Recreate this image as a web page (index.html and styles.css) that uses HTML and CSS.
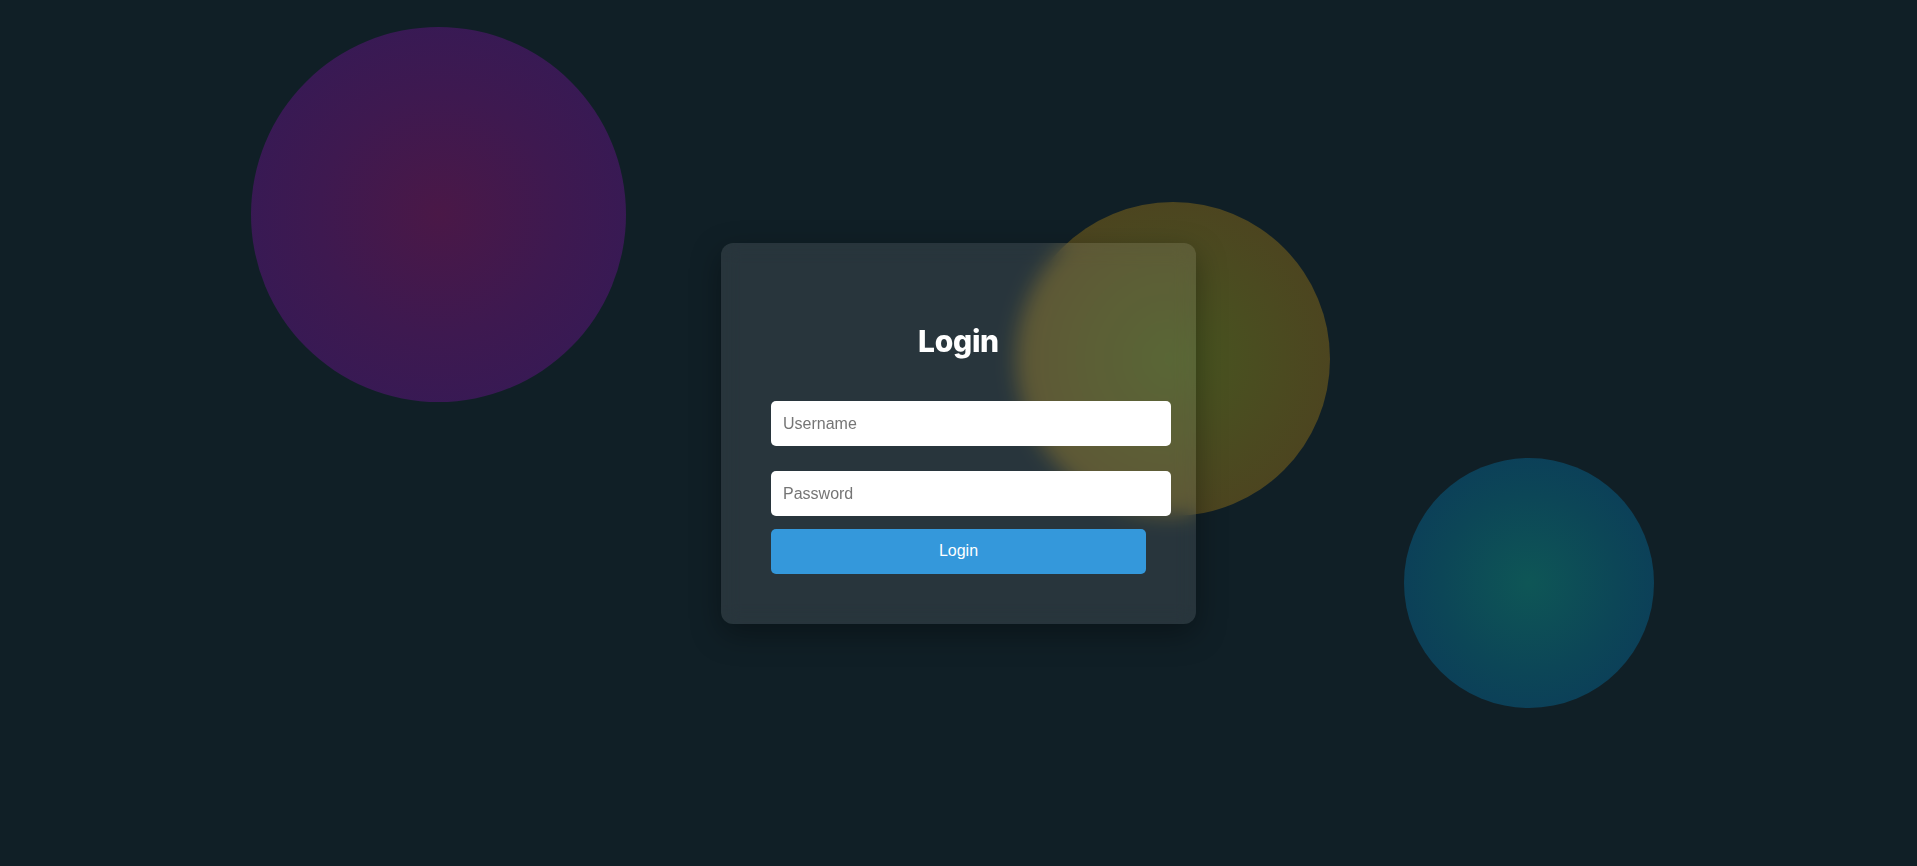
FILE: index.html
```html
<!DOCTYPE html>
<html lang="en">
<head>
<meta charset="utf-8">
<title>Login</title>
<link rel="stylesheet" href="styles.css">
</head>
<body>
  <div class="blob blob-purple"></div>
  <div class="blob blob-yellow"></div>
  <div class="blob blob-teal"></div>
  <main class="stage">
    <form class="card">
      <h1 class="title">Login</h1>
      <input class="field field-user" type="text" placeholder="Username">
      <input class="field field-pass" type="password" placeholder="Password">
      <button class="submit" type="button">Login</button>
    </form>
  </main>
</body>
</html>
```

FILE: styles.css
```css
html, body {
  margin: 0;
  padding: 0;
  height: 100%;
}

body {
  background: #101f26;
  font-family: "Liberation Sans", Arial, sans-serif;
  overflow: hidden;
  position: relative;
}

.blob {
  position: absolute;
  border-radius: 50%;
  z-index: 0;
}

.blob-purple {
  left: 251px;
  top: 27px;
  width: 375px;
  height: 375px;
  background: radial-gradient(circle, #4a1847 0%, #3e1950 45%, #321a58 100%);
}

.blob-yellow {
  left: 1016px;
  top: 202px;
  width: 314px;
  height: 314px;
  background: radial-gradient(circle, #475620 0%, #4b4a20 50%, #4e3e1f 100%);
}

.blob-teal {
  left: 1404px;
  top: 458px;
  width: 250px;
  height: 250px;
  background: radial-gradient(circle, #0e5656 0%, #0c4657 50%, #0b385a 100%);
}

.stage {
  position: relative;
  z-index: 1;
  height: 100%;
  display: flex;
  align-items: center;
  justify-content: center;
}

.card {
  box-sizing: border-box;
  width: 475px;
  padding: 50px;
  border-radius: 12px;
  background: rgba(255, 255, 255, 0.1);
  backdrop-filter: blur(10px);
  -webkit-backdrop-filter: blur(10px);
  box-shadow: 0 10px 30px rgba(0, 0, 0, 0.35);
  display: flex;
  flex-direction: column;
}

.title {
  margin: 30px 0 42px;
  font-family: "Inter", "Noto Sans", sans-serif;
  font-weight: 800;
  font-size: 30px;
  line-height: 36px;
  letter-spacing: -0.3px;
  color: #ffffff;
  text-align: center;
}

.field {
  box-sizing: border-box;
  width: 400px;
  height: 45px;
  padding: 1px 12px 0;
  border: none;
  border-radius: 5px;
  background: #ffffff;
  font-family: "Liberation Sans", Arial, sans-serif;
  font-size: 16px;
  color: #222;
  outline: none;
  box-shadow: none;
  -webkit-appearance: none;
  appearance: none;
}

.field::placeholder {
  color: #757575;
}

.field-user {
  margin-bottom: 25px;
}

.field-pass {
  margin-bottom: 13px;
}

.submit {
  box-sizing: border-box;
  width: 375px;
  height: 45px;
  border: none;
  border-radius: 5px;
  background: #3498db;
  color: #ffffff;
  font-family: "Liberation Sans", Arial, sans-serif;
  font-size: 16px;
  cursor: pointer;
}
```
